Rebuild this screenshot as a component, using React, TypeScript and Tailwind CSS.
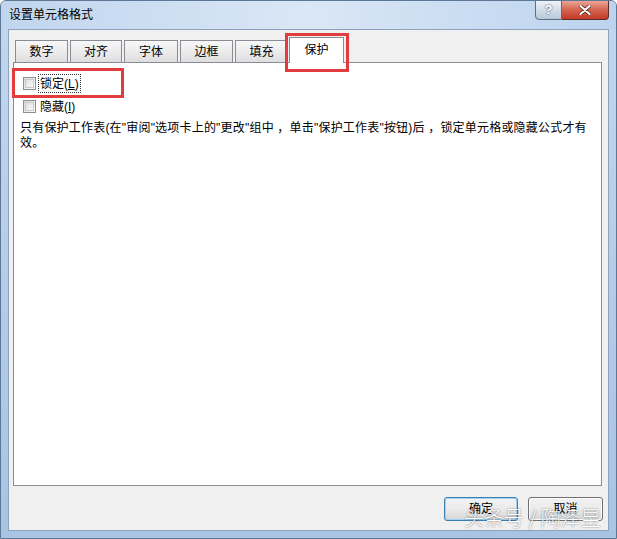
import React from 'react';

const tabs = [
  { label: '数字', w: 'w-[53px]' },
  { label: '对齐', w: 'w-[52px]' },
  { label: '字体', w: 'w-[54px]' },
  { label: '边框', w: 'w-[53px]' },
  { label: '填充', w: 'w-[53px]' },
];

function Checkbox() {
  return (
    <span className="w-[13px] h-[13px] border border-[#8e8f8f] bg-gradient-to-br from-[#dcdcdc] to-[#fbfbfb] flex items-center justify-center shrink-0">
      <span className="w-[9px] h-[9px] bg-gradient-to-br from-[#e1e1e1] to-[#f8f8f8] border border-[#c9c9c9]" />
    </span>
  );
}

function DialogButton({ label, isDefault }: { label: string; isDefault?: boolean }) {
  return (
    <button
      className={
        'h-[24px] rounded-[3px] border bg-gradient-to-b from-[#f2f2f2] via-[#ebebeb] to-[#d6d6d6] text-[12px] text-black ' +
        (isDefault
          ? 'w-[74px] border-[#3c7fb1] shadow-[inset_0_0_0_1px_#9fd3f5]'
          : 'w-[75px] border-[#707070] shadow-[inset_0_0_0_1px_#fcfcfc]')
      }
    >
      {label}
    </button>
  );
}

export default function App() {
  return (
    <div className="relative w-[617px] h-[539px] flex flex-col bg-gradient-to-b from-[#c3d7ee] to-[#a9c3e3] border border-[#5d7896] rounded-t-[6px] font-['Liberation_Sans','Noto_Sans_CJK_SC',sans-serif] text-[12px] text-black overflow-hidden">
      {/* Title bar */}
      <div className="h-[28px] flex items-start justify-between shrink-0 bg-gradient-to-r from-[#c0d5ee] via-[#dae7f6] to-[#bcd3ee]">
        <span className="pl-[8px] pt-[5px] text-[12px] leading-[18px]">设置单元格格式</span>
        <div className="flex mr-[7px] -mt-px">
          <div className="w-[27px] h-[20px] border border-[#5a6d85] rounded-bl-[4px] bg-gradient-to-b from-[#eef3f9] via-[#d3dde9] to-[#b9c7d8] flex items-center justify-center text-white font-bold text-[13px] [text-shadow:0_0_2px_#24364e]">
            ?
          </div>
          <div className="w-[47px] h-[20px] border border-l-0 border-[#5a2e2a] rounded-br-[4px] bg-gradient-to-b from-[#e9a595] via-[#d4634f] to-[#c23a26] flex items-center justify-center">
            <svg width="12" height="10" viewBox="0 0 12 10">
              <path d="M1.5 1 L10.5 9 M10.5 1 L1.5 9" stroke="#5a2018" strokeWidth="3.6" strokeLinecap="round" />
              <path d="M1.5 1 L10.5 9 M10.5 1 L1.5 9" stroke="#ffffff" strokeWidth="2.2" strokeLinecap="round" />
            </svg>
          </div>
        </div>
      </div>

      {/* Client area */}
      <div className="mx-[7px] mb-[7px] flex-1 flex flex-col bg-[#f0f0f0] border border-[#8ca2bd] pl-[4px] pt-[7px]">
        {/* Tabs */}
        <div className="flex items-end h-[26px] -mb-px relative z-10 pl-[2px] gap-[2px]">
          {tabs.map((t) => (
            <div
              key={t.label}
              className={
                t.w +
                ' h-[22px] mb-px border border-b-0 border-[#898c95] bg-gradient-to-b from-[#f7f7f7] via-[#ececec] to-[#dedede] flex items-center justify-center'
              }
            >
              {t.label}
            </div>
          ))}
          <div className="w-[55px] h-[26px] border border-b-0 border-[#898c95] bg-white flex items-center justify-center -ml-[1px] pb-[2px]">
            保护
          </div>
        </div>

        {/* Panel */}
        <div className="w-[589px] h-[424px] border border-[#898c95] bg-white pl-[9px] pt-[11px] pr-[6px] flex flex-col">
          <div className="flex items-center gap-[2px] h-[19px]">
            <Checkbox />
            <span className="border border-dotted border-[#333] px-[1px] h-[19px] flex items-center">
              锁定(<span className="underline">L</span>)
            </span>
          </div>
          <div className="flex items-center gap-[2px] h-[19px] mt-[4px]">
            <Checkbox />
            <span className="px-[2px]">
              隐藏(<span className="underline">I</span>)
            </span>
          </div>
          <p className="mt-[5px] -ml-[3px] leading-[15px] tracking-[0.2px]">
            只有保护工作表(在"审阅"选项卡上的"更改"组中 ，单击"保护工作表"按钮)后 ，锁定单元格或隐藏公式才有
            <br />
            效。
          </p>
        </div>

        {/* Buttons */}
        <div className="flex justify-end gap-[10px] mt-[11px] pr-[5px]">
          <DialogButton label="确定" isDefault />
          <DialogButton label="取消" />
        </div>
      </div>

      {/* Annotation boxes */}
      <div className="absolute left-[284px] top-[32px] w-[64px] h-[39px] border-[3px] border-[#e23c3e] z-20" />
      <div className="absolute left-[11px] top-[67px] w-[112px] h-[30px] border-[3px] border-[#e23c3e] z-20" />

      {/* Watermark */}
      <div className="absolute left-[463px] top-[504px] whitespace-nowrap text-[20px] leading-[26px] text-white font-['Noto_Sans_CJK_SC',sans-serif] font-light [text-shadow:0_0_2px_rgba(0,0,0,0.6)] z-30">
        头条号 / 陶泽昱
      </div>
    </div>
  );
}
